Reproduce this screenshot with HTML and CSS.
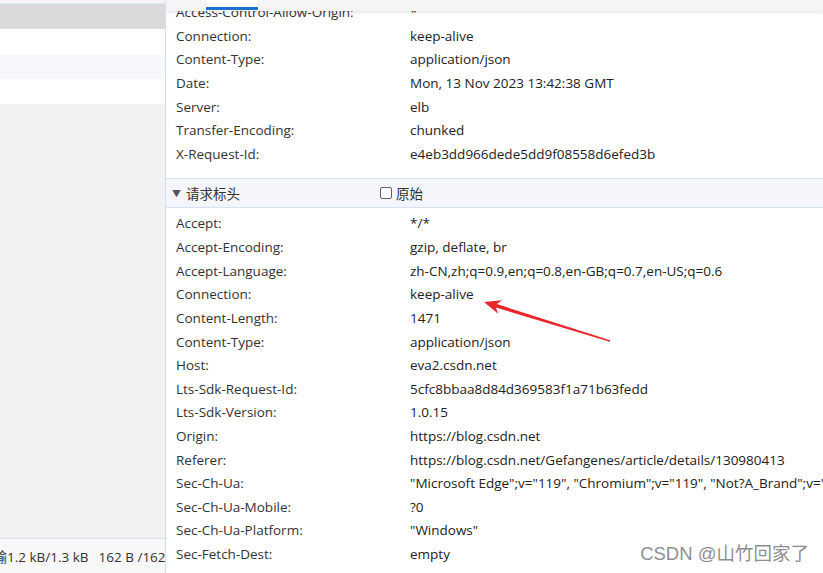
FILE: index.html
```html
<!DOCTYPE html>
<html lang="zh-CN">
<head>
<meta charset="utf-8">
<title>Headers</title>
<link rel="stylesheet" href="styles.css">
</head>
<body>
<div class="app">
  <aside class="list">
    <div class="list-top"></div>
    <div class="list-row selected"></div>
    <div class="list-row r2"></div>
    <div class="list-row alt"></div>
    <div class="list-row r4"></div>
    <div class="list-fill"></div>
    <div class="status"><span class="status-text">传输1.2 kB/1.3 kB</span><span class="status-text2">162 B /162 B 资源</span></div>
  </aside>
  <main class="detail">
    <div class="tabs"><span class="tab-active"></span></div>
    <div class="scroll">
      <div class="content">
        <div class="section first">
          <div class="row"><span class="k">Access-Control-Allow-Origin:</span><span class="v">*</span></div>
          <div class="row"><span class="k">Connection:</span><span class="v">keep-alive</span></div>
          <div class="row"><span class="k">Content-Type:</span><span class="v">application/json</span></div>
          <div class="row"><span class="k">Date:</span><span class="v">Mon, 13 Nov 2023 13:42:38 GMT</span></div>
          <div class="row"><span class="k">Server:</span><span class="v">elb</span></div>
          <div class="row"><span class="k">Transfer-Encoding:</span><span class="v">chunked</span></div>
          <div class="row"><span class="k">X-Request-Id:</span><span class="v">e4eb3dd966dede5dd9f08558d6efed3b</span></div>
        </div>
        <div class="sec-head">
          <span class="sec-title"><span class="tri">▼</span>请求标头</span>
          <label class="raw"><span class="cb"></span>原始</label>
        </div>
        <div class="section second">
          <div class="row"><span class="k">Accept:</span><span class="v">*/*</span></div>
          <div class="row"><span class="k">Accept-Encoding:</span><span class="v">gzip, deflate, br</span></div>
          <div class="row"><span class="k">Accept-Language:</span><span class="v">zh-CN,zh;q=0.9,en;q=0.8,en-GB;q=0.7,en-US;q=0.6</span></div>
          <div class="row"><span class="k">Connection:</span><span class="v">keep-alive</span></div>
          <div class="row"><span class="k">Content-Length:</span><span class="v">1471</span></div>
          <div class="row"><span class="k">Content-Type:</span><span class="v">application/json</span></div>
          <div class="row"><span class="k">Host:</span><span class="v">eva2.csdn.net</span></div>
          <div class="row"><span class="k">Lts-Sdk-Request-Id:</span><span class="v">5cfc8bbaa8d84d369583f1a71b63fedd</span></div>
          <div class="row"><span class="k">Lts-Sdk-Version:</span><span class="v">1.0.15</span></div>
          <div class="row"><span class="k">Origin:</span><span class="v">https://blog.csdn.net</span></div>
          <div class="row"><span class="k">Referer:</span><span class="v">https://blog.csdn.net/Gefangenes/article/details/130980413</span></div>
          <div class="row"><span class="k">Sec-Ch-Ua:</span><span class="v">"Microsoft Edge";v="119", "Chromium";v="119", "Not?A_Brand";v="24"</span></div>
          <div class="row"><span class="k">Sec-Ch-Ua-Mobile:</span><span class="v">?0</span></div>
          <div class="row"><span class="k">Sec-Ch-Ua-Platform:</span><span class="v">"Windows"</span></div>
          <div class="row"><span class="k">Sec-Fetch-Dest:</span><span class="v">empty</span></div>
          <div class="row"><span class="k">Sec-Fetch-Mode:</span><span class="v">cors</span></div>
        </div>
      </div>
    </div>
  </main>
  <svg class="arrow" viewBox="0 0 823 573" width="823" height="573" aria-hidden="true">
    <polygon points="484,302 502.3,300.3 496.9,304.1 610.2,340.2 609.8,341.8 495.9,307.5 498.1,313.7" fill="#e8262b"/>
  </svg>
  <div class="watermark">CSDN @山竹回家了</div>
</div>
</body>
</html>
```
FILE: styles.css
```css
* { box-sizing: border-box; }
html, body { margin: 0; padding: 0; background: #fff; }
body {
  font-family: "Open Sans", "Noto Sans CJK SC", sans-serif;
  font-size: 13.5px;
  color: #333;
}
.app {
  position: relative;
  display: flex;
  width: 823px;
  height: 573px;
  overflow: hidden;
}
.list {
  width: 166px;
  flex: none;
  display: flex;
  flex-direction: column;
  border-right: 1px solid #d5dff3;
  background: #f2f2f2;
}
.list-top { height: 4px; background: #f6f4f8; border-bottom: 1px solid #e2e6f0; }
.list-row { flex: none; }
.selected { height: 25px; background: #dadada; }
.r2 { height: 26px; background: #fff; }
.alt { height: 24px; background: #f7f8fc; }
.r4 { height: 25px; background: #fff; }
.list-fill { flex: 1; background: #f2f2f2; }
.status {
  height: 35px;
  border-top: 1px solid #d6e0f3;
  background: #f8f8f8;
  display: flex;
  align-items: center;
  gap: 10px;
  overflow: hidden;
  white-space: nowrap;
  color: #333;
}
.status-text { margin-left: -20px; flex: none; }
.status-text2 { flex: none; }

.detail {
  flex: 1;
  min-width: 0;
  display: flex;
  flex-direction: column;
  overflow: hidden;
}
.tabs {
  position: relative;
  z-index: 1;
  flex: none;
  height: 11px;
  background: #f5f5f5;
  box-shadow: 0 1px 4px rgba(0, 0, 0, 0.13);
  display: flex;
}
.tab-active {
  margin-left: 40px;
  width: 52px;
  height: 10px;
  background: #fff;
  border-bottom: 3px solid #1b6fd5;
}
.scroll { flex: 1; overflow: hidden; }
.content { margin-top: -9.8px; }
.section.first { padding-bottom: 12px; }
.section.second { padding-top: 4px; }
.row {
  display: grid;
  grid-template-columns: 234px auto;
  padding-left: 10px;
  height: 23.62px;
  line-height: 23.62px;
  white-space: nowrap;
}
.k { color: #333; }
.v { color: #222; }
.sec-head {
  height: 30px;
  display: flex;
  align-items: center;
  padding-left: 6px;
  background: #f4f6fb;
  border-top: 1px solid #d6e1f6;
  border-bottom: 1px solid #d6e1f6;
  color: #333;
}
.sec-title {
  width: 208px;
  display: flex;
  align-items: center;
}
.tri { font-size: 9px; color: #555; width: 14px; }
.raw { display: flex; align-items: center; }
.cb {
  width: 12px;
  height: 12px;
  border: 1px solid #5f6368;
  border-radius: 2px;
  background: #fff;
  margin-right: 4px;
}
.arrow {
  position: absolute;
  left: 0;
  top: 0;
  pointer-events: none;
}
.watermark {
  position: absolute;
  right: 14px;
  bottom: 8px;
  font-family: "Liberation Sans", "Noto Sans CJK SC", sans-serif;
  font-size: 18.5px;
  color: #8f8f8f;
  text-shadow: 1px 1px 0 rgba(255, 255, 255, 0.9);
  white-space: nowrap;
}
```
